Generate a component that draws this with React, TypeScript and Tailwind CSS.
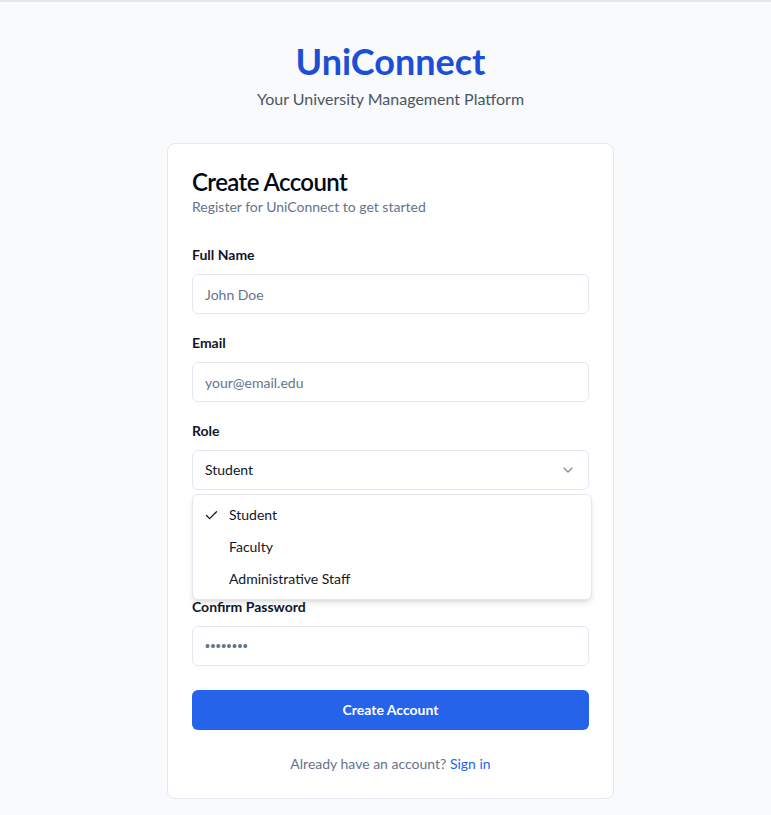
import { Check, ChevronDown } from "lucide-react";

const font = { fontFamily: 'Lato, "Noto Sans", sans-serif' };

function Field({ label, children }: { label: string; children: React.ReactNode }) {
  return (
    <div className="flex flex-col gap-[9px]">
      <label className="text-sm font-bold leading-5 text-[#0f172a]">{label}</label>
      {children}
    </div>
  );
}

function TextInput({ placeholder, type = "text" }: { placeholder: string; type?: string }) {
  return (
    <input
      type={type}
      placeholder={placeholder}
      className={
        "h-10 w-full rounded-md border border-[#e2e8f0] bg-white px-3 text-sm text-[#0f172a] placeholder:text-[#64748b] outline-none " +
        (type === "password" ? "font-['Liberation_Sans'] tracking-[0.5px]" : "")
      }
    />
  );
}

export default function App() {
  const roles = ["Student", "Faculty", "Administrative Staff"];

  return (
    <div style={font} className="min-h-screen border-t-2 border-[#e5e7eb] bg-[#f8fafc] pl-[26px] pr-4 pt-[39px] pb-4">
      <div className="mx-auto flex w-[447px] flex-col">
        <div className="mb-[32px] text-center">
          <h1 className="text-4xl font-bold leading-10 text-[#1d4ed8]">UniConnect</h1>
          <p className="mt-[6px] text-base text-[#4b5563]">Your University Management Platform</p>
        </div>

        <div className="rounded-lg border border-[#e2e8f0] bg-white px-6 pb-6 pt-[22px]">
          <div className="mb-[28px]">
            <h2 className="text-2xl font-semibold leading-8 tracking-tight text-[#020817]">Create Account</h2>
            <p className="-mt-px text-sm text-[#64748b]">Register for UniConnect to get started</p>
          </div>

          <div className="flex flex-col gap-[19px]">
            <Field label="Full Name">
              <TextInput placeholder="John Doe" />
            </Field>
            <Field label="Email">
              <TextInput placeholder="your@email.edu" type="email" />
            </Field>
            <div className="relative">
              <Field label="Role">
                <button className="flex h-10 w-full items-center justify-between rounded-md border border-[#e2e8f0] bg-white px-3 text-sm text-[#0f172a]">
                  <span>Student</span>
                  <ChevronDown size={16} className="opacity-50" />
                </button>
              </Field>
              <div className="absolute left-0 top-[calc(100%+4px)] z-10 w-[400px] rounded-md border border-[#e2e8f0] bg-white p-1 shadow-md">
                {roles.map((r, i) => (
                  <div key={r} className="relative flex h-8 items-center pl-8 text-sm text-[#0f172a]">
                    {i === 0 && (
                      <span className="absolute left-[7px] flex items-center">
                        <Check size={15} strokeWidth={2} />
                      </span>
                    )}
                    {r}
                  </div>
                ))}
              </div>
            </div>
            <Field label="Password">
              <TextInput placeholder="••••••••" type="password" />
            </Field>
            <Field label="Confirm Password">
              <TextInput placeholder="••••••••" type="password" />
            </Field>
          </div>

          <button className="mt-6 h-10 w-full rounded-md bg-[#2563eb] text-sm font-bold text-white">
            Create Account
          </button>

          <p className="mt-6 text-center text-sm text-[#64748b]">
            Already have an account? <a className="text-[#2563eb]">Sign in</a>
          </p>
        </div>
      </div>
    </div>
  );
}
